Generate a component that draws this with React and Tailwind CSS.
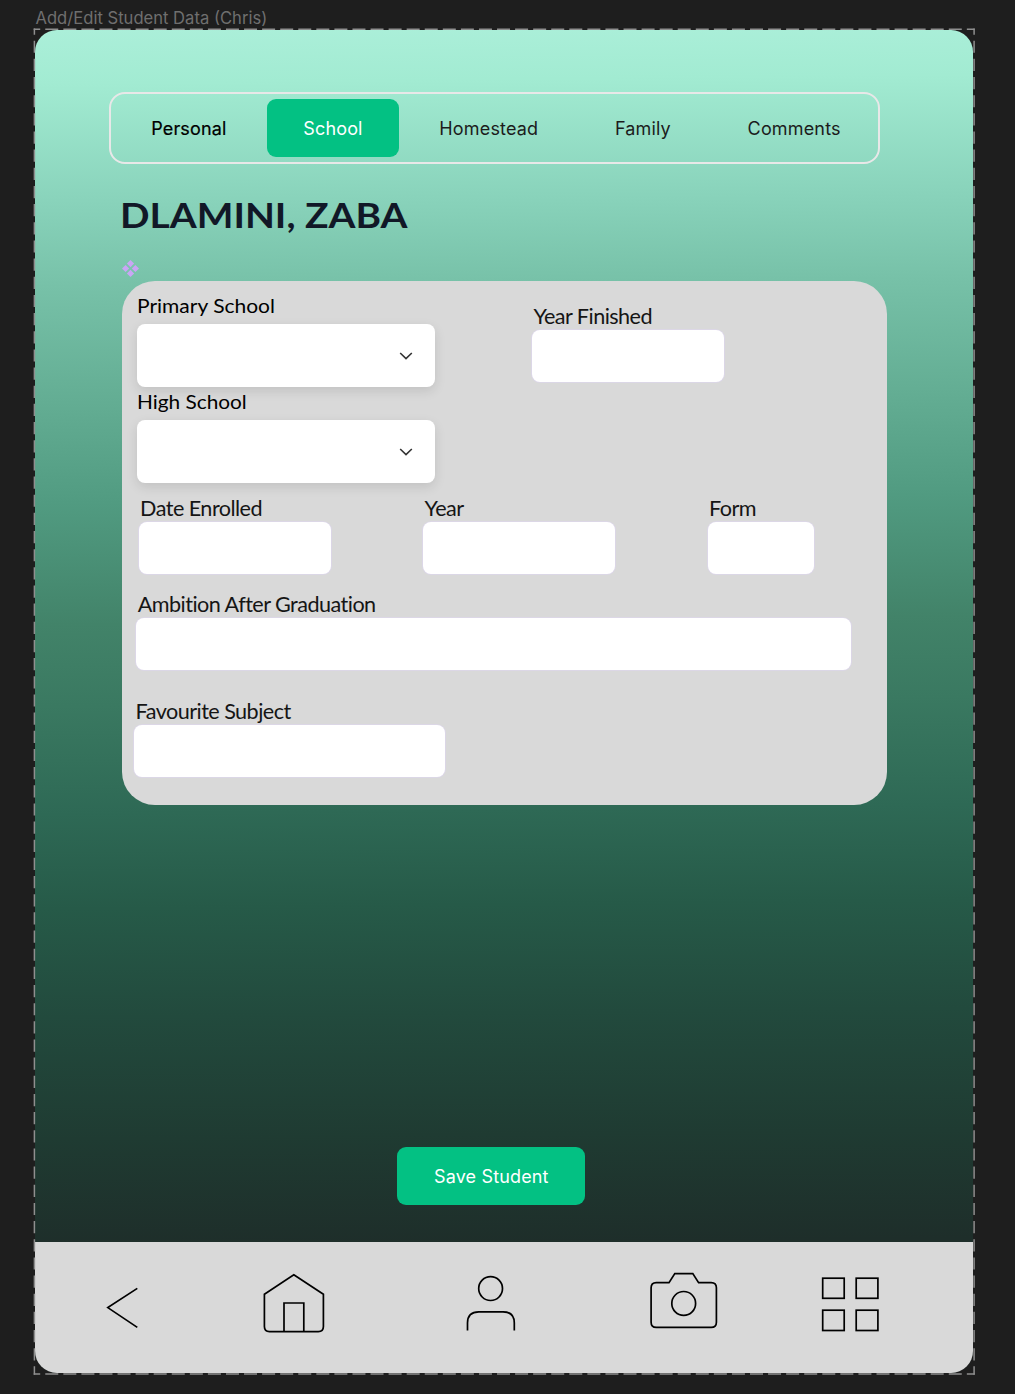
import React from "react";

const tabs = [
  { name: "Personal", style: "text-black [-webkit-text-stroke:0.2px_black]" },
  { name: "School", style: "bg-[#03c183] text-white" },
  { name: "Homestead", style: "text-[#1c1c1c]" },
  { name: "Family", style: "text-[#1c1c1c]" },
  { name: "Comments", style: "text-[#1c1c1c]" },
];

function Tabs() {
  return (
    <nav className="ml-[73.7px] mt-[62.2px] flex h-[71.8px] w-[771.5px] shrink-0 items-center gap-[4.7px] rounded-2xl border-2 border-[#e8e8e8] pl-[4.2px] font-['Inter',sans-serif]">
      {tabs.map((t) => (
        <button
          key={t.name}
          className={`h-[58px] rounded-[9px] px-9 pt-[2px] text-[18px] tracking-[0.009em] ${t.style}`}
        >
          {t.name}
        </button>
      ))}
    </nav>
  );
}

function SelectField({ label, stretch }) {
  return (
    <div className="flex flex-col">
      <label className={`mb-[5.5px] mt-[1px] origin-left self-start whitespace-nowrap font-['Lato',sans-serif] text-[18.5px] leading-6 text-black ${stretch}`}>
        {label}
      </label>
      <button className="flex h-[63.5px] w-[298.5px] items-center justify-end rounded-lg bg-white pr-[22px] pt-[1px] shadow-[0_4px_12px_rgba(0,0,0,0.11)]">
        <svg width="14" height="10" viewBox="0 0 14 10" fill="none" stroke="#333" strokeWidth="1.6">
          <path d="M1.2 2 L7 7.6 L12.8 2" />
        </svg>
      </button>
    </div>
  );
}

function TextField({ label, width }) {
  return (
    <div className="flex flex-col">
      <label className="mb-[2px] ml-[1.3px] whitespace-nowrap font-['Lato',sans-serif] text-[21.6px] leading-6 tracking-[-0.025em] text-[#151515]">
        {label}
      </label>
      <div className={`h-[52px] rounded-lg bg-white shadow-[0_0_0_0.8px_#dcd6ea] ${width}`} />
    </div>
  );
}

function Icon({ x, w, className, label, children }) {
  return (
    <button aria-label={label} className={className}>
      <svg
        width={w}
        height="131"
        viewBox={`${x} 1242 ${w} 131`}
        fill="none"
        stroke="#000"
        strokeWidth="1.7"
        className="block"
      >
        {children}
      </svg>
    </button>
  );
}

function BottomNav() {
  return (
    <footer className="flex h-[131.3px] shrink-0 bg-[#d9d9d9]">
      <Icon label="Back" x={100} w={44} className="ml-[64.7px]">
        <path d="M137.3 1288.4 L107.8 1307.6 L137.3 1327.4" />
      </Icon>
      <Icon label="Home" x={260} w={68} className="ml-[116px]">
        <path d="M293.8 1274.8 L323.4 1294.3 V1326.5 Q323.4 1331.6 318.3 1331.6 H269.5 Q264.4 1331.6 264.4 1326.5 V1294.3 Z" />
        <path d="M284 1331.6 V1303 H303.8 V1331.6" />
      </Icon>
      <Icon label="Profile" x={460} w={62} className="ml-[132px]">
        <circle cx="490.6" cy="1288.6" r="11.9" />
        <path d="M467.5 1330.6 V1323 Q467.5 1311.8 478.8 1311.8 H503 Q514.3 1311.8 514.3 1323 V1330.6" />
      </Icon>
      <Icon label="Camera" x={646} w={76} className="ml-[124px]">
        <path d="M656.3 1282.6 H669 L674.8 1273.6 H692.8 L698.6 1282.6 H711.2 Q716.4 1282.6 716.4 1287.8 V1322.2 Q716.4 1327.4 711.2 1327.4 H656.3 Q651.1 1327.4 651.1 1322.2 V1287.8 Q651.1 1282.6 656.3 1282.6 Z" />
        <circle cx="683.7" cy="1303.4" r="11.9" />
      </Icon>
      <Icon label="Menu" x={818} w={66} className="ml-[96px]">
        <rect x="822.7" y="1278.2" width="21.5" height="20.1" />
        <rect x="856.2" y="1278.2" width="21.7" height="20.1" />
        <rect x="822.7" y="1310.2" width="21.5" height="20.3" />
        <rect x="856.2" y="1310.2" width="21.7" height="20.3" />
      </Icon>
    </footer>
  );
}

/* Dashed selection outline drawn over the edges of the frame */
function SelectionOutline() {
  return (
    <svg
      className="pointer-events-none absolute left-0 top-0"
      width="1015"
      height="1394"
      fill="none"
      stroke="#8f8f8f"
      strokeWidth="1.5"
    >
      <g strokeDasharray="13 5.07" strokeDashoffset="6.5">
        <path d="M33.7 29.3 H974.7" />
        <path d="M33.7 1374.1 H974.7" />
      </g>
      <g strokeDasharray="12.2 5.96" strokeDashoffset="6.1">
        <path d="M34.4 28.6 V1374.8" />
        <path d="M974.1 28.6 V1374.8" />
      </g>
    </svg>
  );
}

export default function App() {
  return (
    <div className="relative flex h-[1394px] w-[1015px] flex-col overflow-hidden bg-[#1e1e1e]">
      <div className="ml-[35.5px] mt-[5.5px] h-[24.3px] shrink-0 font-['Inter',sans-serif] text-[16.6px] leading-6 text-[#6f6f6f]">
        Add/Edit Student Data (Chris)
      </div>
      <main className="ml-[35.3px] flex h-[1343.5px] w-[938.2px] shrink-0 flex-col overflow-hidden rounded-[22px] bg-[linear-gradient(179.4deg,#abefd9_0%,#a2ebd2_4%,#88d2ba_13%,#77c1a8_19%,#62ac92_28%,#519b81_35%,#428369_44%,#3a7961_50%,#2e6955_58%,#265a48_65%,#224a3d_73%,#1f3b32_82%,#1e2e2a_90%)]">
        <Tabs />
        <h1 className="ml-[85px] mt-[30.7px] origin-left scale-x-[1.11] self-start whitespace-nowrap font-['Lato',sans-serif] text-[35px] font-bold leading-10 text-[#111827]">
          DLAMINI, ZABA
        </h1>
        <svg className="ml-[87px] mt-[25.5px] shrink-0" width="17" height="17" viewBox="0 0 17 17" fill="#c9a6f5">
          <path d="M8.5 0 L12.1 3.6 L8.5 7.2 L4.9 3.6 Z M8.5 9.8 L12.1 13.4 L8.5 17 L4.9 13.4 Z M3.6 4.9 L7.2 8.5 L3.6 12.1 L0 8.5 Z M13.4 4.9 L17 8.5 L13.4 12.1 L9.8 8.5 Z" />
        </svg>
        <section className="ml-[86.5px] mt-[4px] h-[524.3px] w-[765px] shrink-0 rounded-[33px] bg-[#d9d9d9] pt-[12.5px]">
          <div className="flex pl-[14.8px]">
            <div className="flex flex-col gap-[1.8px]">
              <SelectField label="Primary School" stretch="scale-x-[1.135]" />
              <SelectField label="High School" stretch="scale-x-[1.125]" />
            </div>
            <div className="ml-[97px] mt-[10.7px]">
              <TextField label="Year Finished" width="w-[192px]" />
            </div>
          </div>
          <div className="mt-[12.3px] flex pl-[17px]">
            <TextField label="Date Enrolled" width="w-[192px]" />
            <div className="ml-[92.5px]">
              <TextField label="Year" width="w-[192px]" />
            </div>
            <div className="ml-[92.5px]">
              <TextField label="Form" width="w-[106.5px]" />
            </div>
          </div>
          <div className="mt-[18.1px] pl-[14.7px]">
            <TextField label="Ambition After Graduation" width="w-[714.3px]" />
          </div>
          <div className="mt-[29px] pl-[12.5px]">
            <TextField label="Favourite Subject" width="w-[310.3px]" />
          </div>
        </section>
        <button className="ml-[362px] mt-[341.3px] h-[58.3px] w-[188px] shrink-0 rounded-[9px] bg-[#03c183] pt-[1px] font-['Inter',sans-serif] text-[18px] tracking-[0.008em] text-white">
          Save Student
        </button>
        <div className="grow" />
        <BottomNav />
      </main>
      <SelectionOutline />
    </div>
  );
}
